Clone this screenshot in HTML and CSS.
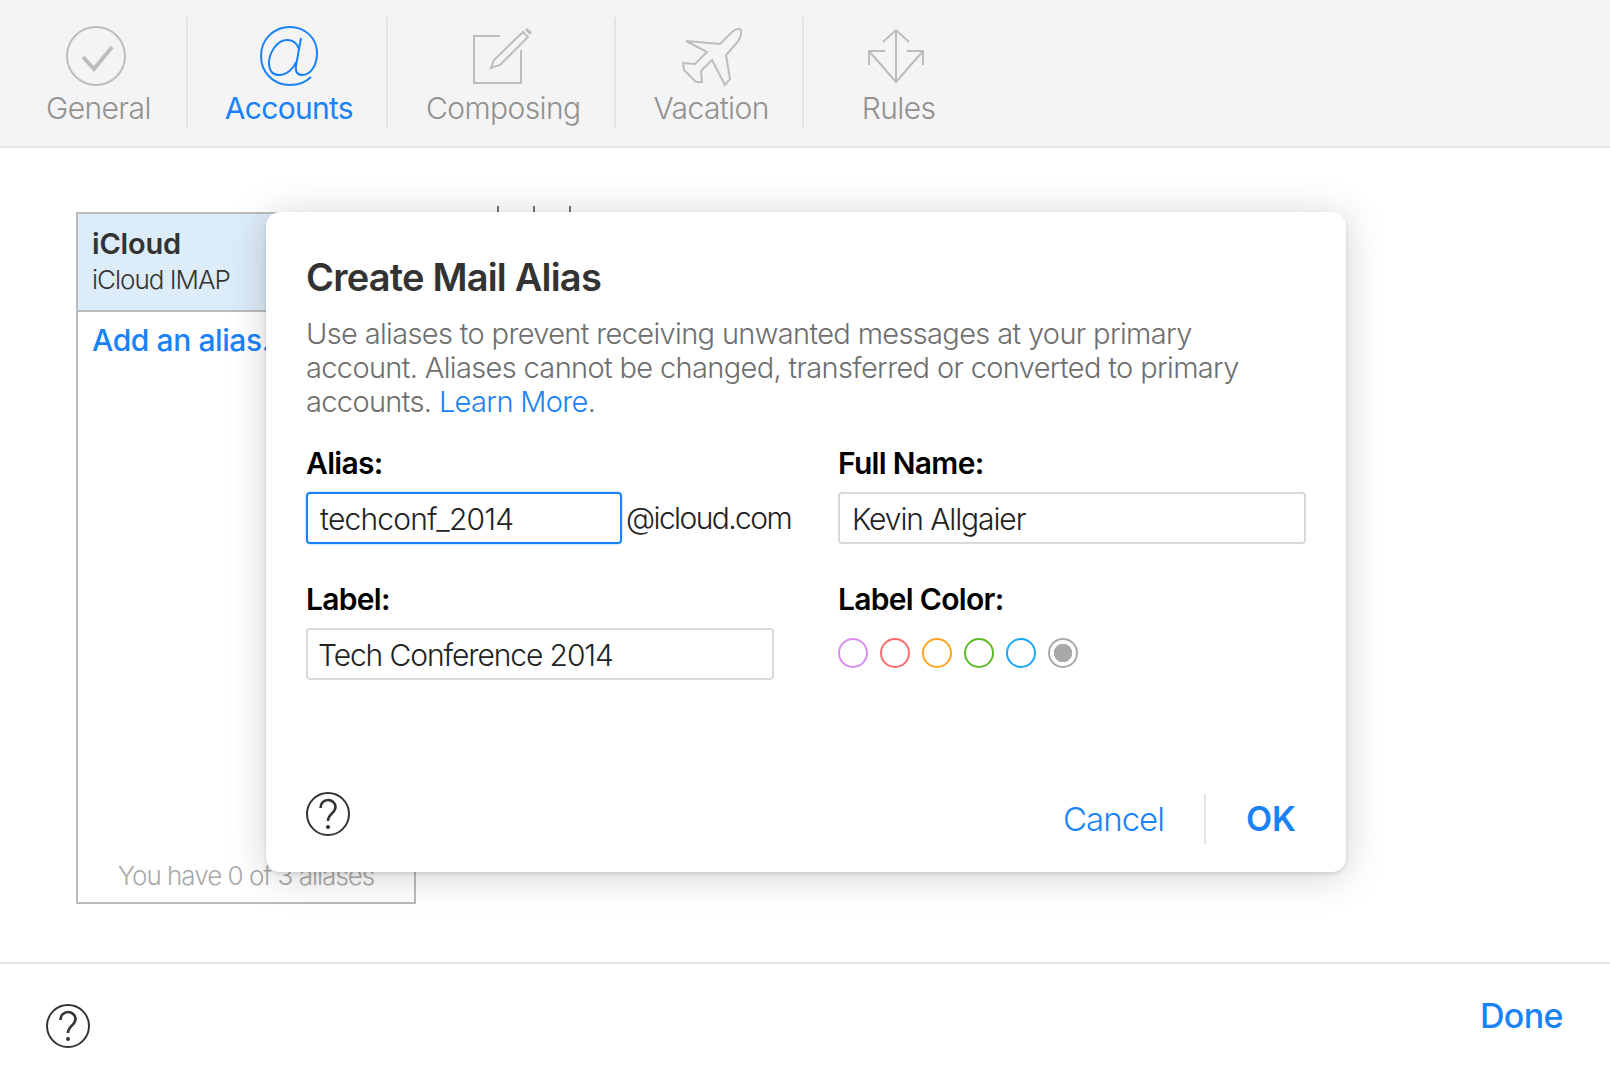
FILE: index.html
```html
<!DOCTYPE html>
<html lang="en">
<head>
<meta charset="utf-8">
<title>Create Mail Alias</title>
<link rel="stylesheet" href="styles.css">
</head>
<body>
<div class="page">
  <nav class="toolbar">
    <div class="tab tab-first">
      <svg class="tab-icon" viewBox="0 0 64 60"><circle cx="32" cy="29" r="29" class="ic"/><path d="M19 30l11 12 18-22" class="ic ic-thick"/></svg>
      <span class="tab-label">General</span>
    </div>
    <div class="tab tab-active">
      <svg class="tab-icon" viewBox="0 0 64 60"><path class="ic ic-blue" d="M54 50C49 55 41 58 33 58 16 58 4 45 4 29 4 12 17 0 33 0 48 0 60 11 60 26 60 38 54 48 45 48 40 48 38 44 39 39L44 11M42 22C40 16 36 13 30 13 20 13 12 26 12 36 12 44 16 48 22 48 30 48 37 41 39 35"/></svg>
      <span class="tab-label">Accounts</span>
    </div>
    <div class="tab">
      <svg class="tab-icon" viewBox="0 0 64 60"><path class="ic" d="M29 9H3V56H50V23"/><path class="ic" d="M20 41l3-8L52 5l5 5-28 28z"/><path d="M54 3l2-2 5 4-2 3z" class="ic-fill"/></svg>
      <span class="tab-label">Composing</span>
    </div>
    <div class="tab tab-vacation">
      <svg class="tab-icon" viewBox="0 0 64 60"><path class="ic" d="M7 14L41 17 52 6C56 2 62 0 62 4 63 8 60 14 56 18L47 28 51 52 46 58 33 33 22 44 23 55 17 55 5 43 4 36 16 37 28 25z"/></svg>
      <span class="tab-label">Vacation</span>
    </div>
    <div class="tab tab-rules">
      <svg class="tab-icon" viewBox="0 0 64 60"><path class="ic" d="M32 3V55M19 15L32 3 45 15M5 38V24H21M5 24L32 55 59 24M59 38V24H43"/></svg>
      <span class="tab-label">Rules</span>
    </div>
  </nav>

  <main class="content">
    <aside class="accounts">
      <div class="account-row">
        <div class="account-name">iCloud</div>
        <div class="account-type">iCloud IMAP</div>
      </div>
      <a class="add-alias">Add an alias...</a>
      <div class="alias-count">You have 0 of 3 aliases</div>
    </aside>
    <div class="detail-peek"><i></i><i></i><i></i></div>
  </main>

  <footer class="footer">
    <svg class="help" viewBox="0 0 44 44"><circle cx="22" cy="22" r="21"/><path class="help-mark" d="M14.500 16c0-5 3.500-8 7.500-8s7.500 3 7.500 7c0 6-7.500 7-7.500 14"/><circle cx="22" cy="35" r="2" class="help-dot"/></svg>
    <a class="done">Done</a>
  </footer>

  <section class="modal">
    <h1 class="modal-title">Create Mail Alias</h1>
    <p class="modal-text">Use aliases to prevent receiving unwanted messages at your primary<br>account. Aliases cannot be changed, transferred or converted to primary<br>accounts. <a class="link">Learn More</a>.</p>
    <div class="form">
      <div class="field">
        <div class="field-label">Alias:</div>
        <div class="alias-row">
          <div class="input input-focus">techconf_2014</div>
          <span class="domain">@icloud.com</span>
        </div>
      </div>
      <div class="field">
        <div class="field-label">Full Name:</div>
        <div class="input">Kevin Allgaier</div>
      </div>
      <div class="field">
        <div class="field-label">Label:</div>
        <div class="input input-tech">Tech Conference 2014</div>
      </div>
      <div class="field">
        <div class="field-label">Label Color:</div>
        <div class="swatches">
          <span class="swatch sw-purple"></span>
          <span class="swatch sw-red"></span>
          <span class="swatch sw-orange"></span>
          <span class="swatch sw-green"></span>
          <span class="swatch sw-blue"></span>
          <span class="swatch sw-gray"></span>
        </div>
      </div>
    </div>
    <div class="modal-foot">
      <svg class="help" viewBox="0 0 44 44"><circle cx="22" cy="22" r="21"/><path class="help-mark" d="M14.500 16c0-5 3.500-8 7.500-8s7.500 3 7.500 7c0 6-7.500 7-7.500 14"/><circle cx="22" cy="35" r="2" class="help-dot"/></svg>
      <div class="actions">
        <a class="cancel">Cancel</a>
        <a class="ok">OK</a>
      </div>
    </div>
  </section>
</div>
</body>
</html>
```
FILE: styles.css
```css
* { box-sizing: border-box; }
html, body { margin: 0; padding: 0; height: 100%; }
body {
  background: #fff;
  font-family: "Inter", "Liberation Sans", sans-serif;
  overflow: hidden;
}
.page {
  position: relative;
  width: 1610px;
  height: 1076px;
  display: flex;
  flex-direction: column;
}
.toolbar {
  display: flex;
  height: 148px;
  padding-top: 17px;
  background: #f4f4f4;
  border-bottom: 2px solid #e5e5e5;
  flex: none;
}
.tab {
  height: 111px;
  padding: 0 34px 0 38px;
  border-right: 2px solid #e4e4e4;
  display: flex;
  flex-direction: column;
  align-items: center;
}
.tab-first { padding-left: 46px; padding-right: 35px; }
.tab-first .tab-icon { margin-right: 4px; }
.tab-active { padding-left: 37px; padding-right: 33px; }
.tab-vacation { padding-left: 37px; padding-right: 33px; }
.tab-rules { padding-left: 58px; border-right: 0; }
.tab-rules .tab-icon { margin-right: 6px; }
.tab-icon { width: 64px; height: 60px; margin-top: 10px; flex: none; overflow: visible; }
.ic { fill: none; stroke: #bdbdbd; stroke-width: 2; }
.ic-thick { stroke-width: 4; }
.ic-blue { stroke: #1a82f7; stroke-width: 2; }
.ic-fill { fill: #bdbdbd; }
.tab-label {
  margin-top: 3px;
  font-size: 30px;
  line-height: 36px;
  font-weight: 300;
  letter-spacing: -0.6px;
  color: #919191;
  white-space: nowrap;
}
.tab-active .tab-label { color: #1a82f7; font-weight: 400; letter-spacing: -0.7px; }

.content {
  flex: 1;
  display: flex;
  padding: 64px 0 58px 76px;
}
.accounts {
  width: 340px;
  border: 2px solid #bbb;
  display: flex;
  flex-direction: column;
}
.account-row {
  height: 98px;
  padding: 12px 14px 0;
  background: #dcecf8;
  border-bottom: 2px solid #bbb;
}
.account-name { font-size: 29px; line-height: 36px; font-weight: 600; color: #333; letter-spacing: -0.2px; }
.account-type { font-size: 26px; line-height: 36px; font-weight: 300; color: #333; letter-spacing: -1px; }
.add-alias {
  margin: 9px 14px 0;
  font-size: 30px;
  line-height: 38px;
  font-weight: 500;
  color: #1a82f7;
  letter-spacing: -0.4px;
  white-space: nowrap;
}
.alias-count {
  margin-top: auto;
  padding-bottom: 8px;
  text-align: center;
  font-size: 26px;
  line-height: 36px;
  font-weight: 300;
  letter-spacing: -1px;
  color: #a9a9a9;
}
.detail-peek {
  display: flex;
  gap: 34px;
  margin: -6px 0 0 81px;
  height: 10px;
}
.detail-peek i { display: block; width: 2px; height: 10px; background: #777; }

.footer {
  flex: none;
  height: 114px;
  border-top: 2px solid #e5e5e5;
  display: flex;
  justify-content: space-between;
  padding: 40px 47px 0 46px;
}
.help { width: 44px; height: 44px; flex: none; fill: none; stroke: #333; stroke-width: 2; }
.help-mark { stroke-width: 2.6; }
.help-dot { fill: #333; stroke: none; }
.done {
  margin-top: -8px;
  font-size: 34px;
  line-height: 40px;
  font-weight: 500;
  color: #1a82f7;
  letter-spacing: -0.6px;
}

.modal {
  position: absolute;
  left: 266px;
  top: 212px;
  width: 1080px;
  height: 660px;
  padding: 43px 40px 0;
  background: #fff;
  border-radius: 14px;
  box-shadow: 0 2px 4px rgba(0,0,0,.12), 0 4px 40px rgba(0,0,0,.18);
  display: flex;
  flex-direction: column;
}
.modal-title {
  margin: 0;
  font-size: 38px;
  line-height: 44px;
  font-weight: 600;
  letter-spacing: -0.8px;
  color: #333;
}
.modal-text {
  margin: 18px 0 0;
  font-size: 29px;
  line-height: 34px;
  font-weight: 300;
  letter-spacing: -0.65px;
  color: #6e6e6e;
  white-space: nowrap;
}
.link { color: #1a82f7; }
.form {
  margin-top: 26px;
  display: grid;
  grid-template-columns: 468px 468px;
  column-gap: 64px;
  row-gap: 37px;
}
.field-label {
  font-size: 30px;
  line-height: 36px;
  font-weight: 600;
  letter-spacing: -0.7px;
  color: #000;
  margin-bottom: 11px;
}
.alias-row { display: flex; align-items: center; gap: 4px; }
.input {
  height: 52px;
  padding: 0 12px;
  border: 2px solid #d9d9d9;
  border-radius: 4px;
  font-size: 30px;
  line-height: 50px;
  font-weight: 300;
  letter-spacing: -1.1px;
  color: #222;
  white-space: nowrap;
}
.input-tech { text-indent: -2px; }
.input-focus {
  flex: none;
  width: 316px;
  border-color: #1a82f7;
  letter-spacing: -0.8px;
  box-shadow: 0 0 2px rgba(26,130,247,.6);
}
.domain { font-size: 30px; font-weight: 300; letter-spacing: -1.6px; color: #222; white-space: nowrap; }
.swatches { display: flex; gap: 12px; padding-top: 10px; }
.swatch { width: 30px; height: 30px; border-radius: 50%; border: 2px solid; display: block; }
.sw-purple { border-color: #dc8cf0; }
.sw-red { border-color: #ff6b6e; }
.sw-orange { border-color: #ffa526; }
.sw-green { border-color: #5cbb26; }
.sw-blue { border-color: #1ba6f2; }
.sw-gray { border-color: #a9a9a9; background: radial-gradient(circle, #a9a9a9 0 9px, #fff 9.5px); }
.modal-foot {
  margin-top: auto;
  height: 80px;
  display: flex;
  justify-content: space-between;
  align-items: flex-start;
}
.actions { display: flex; height: 50px; margin-top: 2px; align-items: center; margin-right: 10px; }
.cancel {
  padding-right: 40px;
  height: 50px;
  line-height: 50px;
  font-size: 33px;
  font-weight: 300;
  letter-spacing: -1px;
  color: #1a82f7;
  border-right: 2px solid #e4e4e4;
}
.ok {
  padding-left: 40px;
  font-size: 34px;
  line-height: 50px;
  font-weight: 600;
  color: #1a82f7;
}
```
